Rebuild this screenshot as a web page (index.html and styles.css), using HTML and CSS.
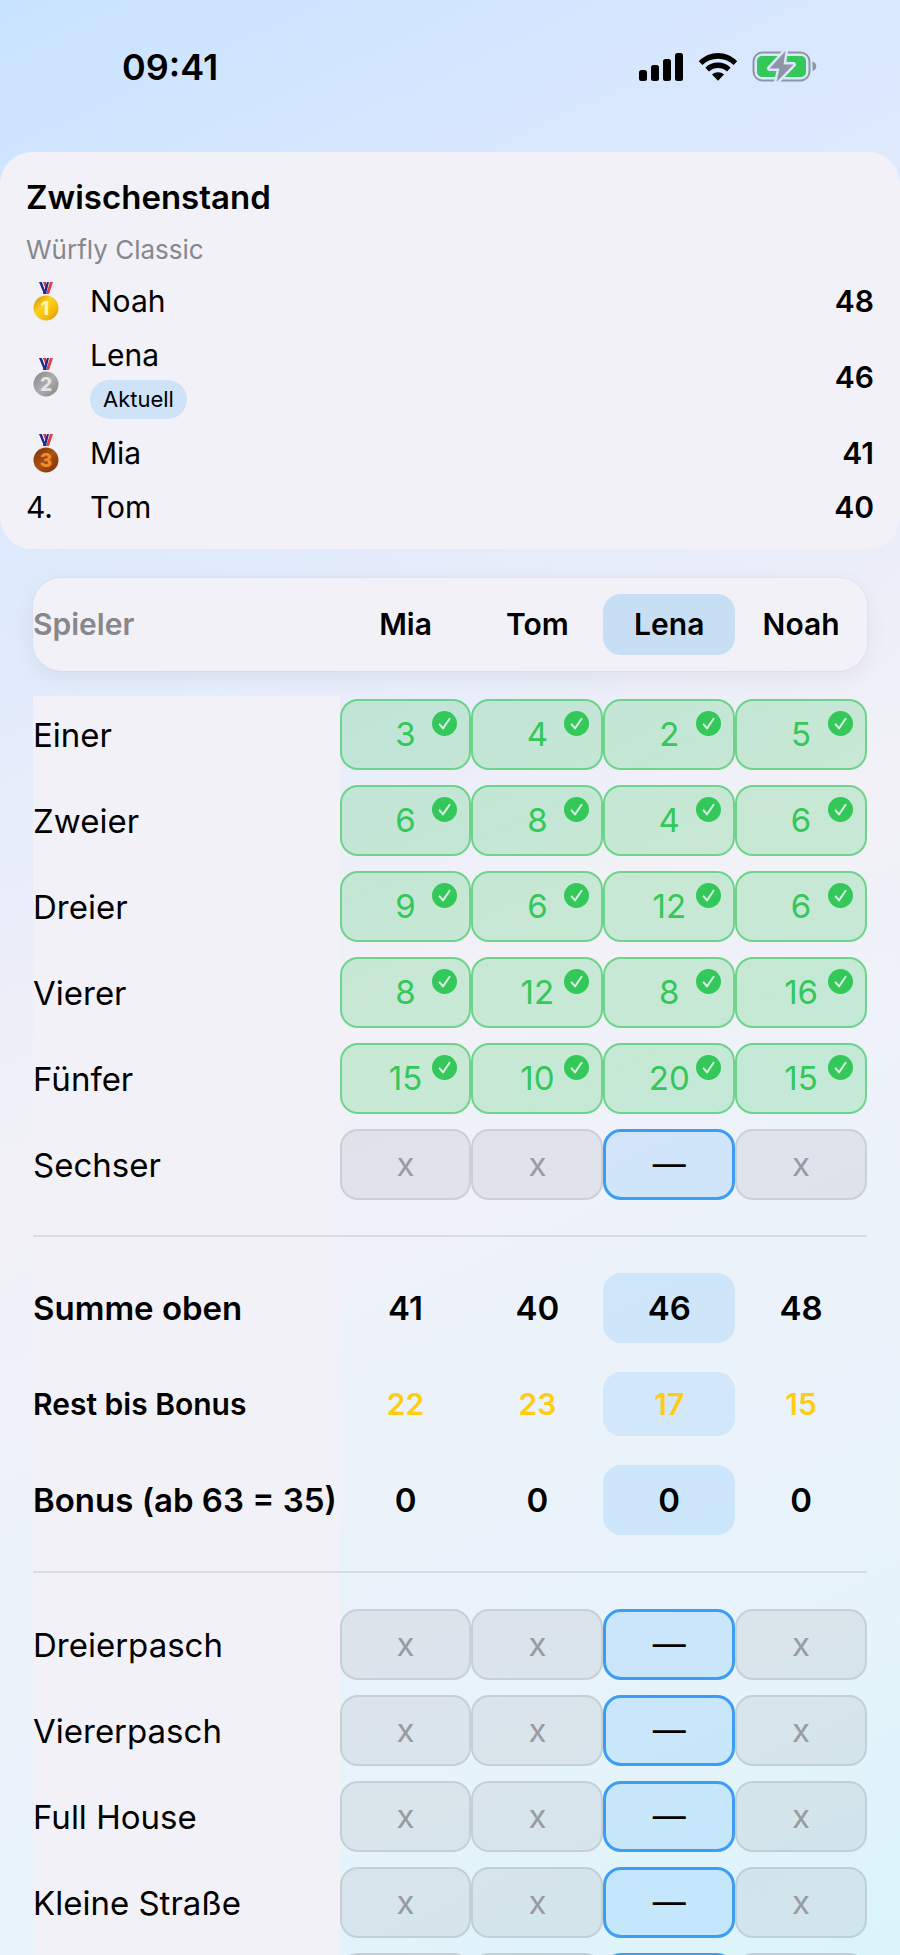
FILE: index.html
```html
<!DOCTYPE html>
<html lang="de">
<head>
    <meta charset="UTF-8">
    <meta name="viewport" content="width=device-width, initial-scale=1.0">
    <title>Würfly Classic - Zwischenstand</title>
    <link rel="stylesheet" href="styles.css">
</head>
<body>
    <svg class="sprite" aria-hidden="true">
        <symbol id="check" viewBox="0 0 25 25">
            <circle cx="12.5" cy="12.5" r="12.5" fill="#34c759"/>
            <path d="M7.600 13.400L11 17.400L17.600 7.800" fill="none" stroke="#d9f3e1" stroke-width="2" stroke-linecap="round" stroke-linejoin="round"/>
        </symbol>
        <symbol id="ribbon" viewBox="0 0 26 13">
            <path d="M6 0h3l5 12h-3z" fill="#22278f"/>
            <path d="M9 0h1l4 9-1 3z" fill="#f4f4fa"/>
            <path d="M10 0h3l1 5-1 3z" fill="#d8343c"/>
            <path d="M14 0h2l-3 12h-3z" fill="#22278f"/>
            <path d="M20 0h-3l-4 12h3z" fill="#e04048"/>
        </symbol>
        <linearGradient id="gold" x1="0" y1="0" x2="1" y2="1">
            <stop offset="0" stop-color="#c98a06"/>
            <stop offset="0.4" stop-color="#fbd21c"/>
            <stop offset="0.7" stop-color="#f3bb0c"/>
            <stop offset="1" stop-color="#c98a06"/>
        </linearGradient>
        <linearGradient id="silver" x1="0" y1="0" x2="1" y2="1">
            <stop offset="0" stop-color="#868686"/>
            <stop offset="0.5" stop-color="#adadad"/>
            <stop offset="1" stop-color="#858585"/>
        </linearGradient>
        <linearGradient id="bronze" x1="0" y1="0" x2="1" y2="1">
            <stop offset="0" stop-color="#7a3208"/>
            <stop offset="0.5" stop-color="#ad5010"/>
            <stop offset="1" stop-color="#74300a"/>
        </linearGradient>
    </svg>

    <div class="status-bar">
        <time class="clock">09:41</time>
        <div class="status-icons">
            <svg width="46" height="30" viewBox="0 0 46 30" aria-label="Mobilfunk">
                <rect x="1" y="18" width="8" height="11" rx="2.500"/>
                <rect x="13" y="13" width="8" height="16" rx="2.500"/>
                <rect x="25" y="7" width="8" height="22" rx="2.500"/>
                <rect x="37" y="1" width="8" height="28" rx="2.500"/>
            </svg>
            <svg width="40" height="30" viewBox="0 0 40 30" aria-label="WLAN">
                <path d="M0.800 9.200C11.500-1.900 28.500-1.900 39.200 9.200L35.600 13C27 4.600 13 4.600 4.400 13Z"/>
                <path d="M7.400 15.700C14.300 8.900 25.700 8.900 32.600 15.700L29 19.500C24 14.900 16 14.900 11 19.500Z"/>
                <path d="M14 22.500C17.500 19.600 22.500 19.600 26 22.500L20 28.800Z"/>
            </svg>
            <svg width="65" height="31" viewBox="0 0 65 31" aria-label="Akku lädt">
                <rect x="1.500" y="1.500" width="56" height="28" rx="9" fill="none" stroke="#8e95a6" stroke-width="2"/>
                <rect x="5" y="5" width="49" height="21" rx="5" fill="#34c759"/>
                <path d="M60.500 10.500c5 1 5 8.500 0 9.500z" fill="#8e95a6"/>
                <path d="M33.500 0L17.500 17.500H27.500L24.500 31L41.500 13.500H31.500Z" fill="#8e95a6" stroke="#dae7fe" stroke-width="5" stroke-linejoin="round" paint-order="stroke"/>
            </svg>
        </div>
    </div>

    <main>
        <section class="standings">
            <h1>Zwischenstand</h1>
            <p class="mode">Würfly Classic</p>
            <ol class="ranking">
                <li>
                    <svg class="medal" viewBox="0 0 26 39" role="img" aria-label="1.">
                        <use href="#ribbon" width="26" height="13"/>
                        <circle cx="13" cy="26" r="12.500" fill="url(#gold)"/>
                        <text x="12" y="33" fill="#fff3b0">1</text>
                    </svg>
                    <span class="name">Noah</span>
                    <span class="points">48</span>
                </li>
                <li>
                    <svg class="medal" viewBox="0 0 26 39" role="img" aria-label="2.">
                        <use href="#ribbon" width="26" height="13"/>
                        <circle cx="13" cy="26" r="12.500" fill="url(#silver)"/>
                        <text x="13" y="33" fill="#e4e4e4">2</text>
                    </svg>
                    <span class="name">Lena <span class="badge">Aktuell</span></span>
                    <span class="points">46</span>
                </li>
                <li>
                    <svg class="medal" viewBox="0 0 26 39" role="img" aria-label="3.">
                        <use href="#ribbon" width="26" height="13"/>
                        <circle cx="13" cy="26" r="12.500" fill="url(#bronze)"/>
                        <text x="13" y="33" fill="#ee8c34">3</text>
                    </svg>
                    <span class="name">Mia</span>
                    <span class="points">41</span>
                </li>
                <li>
                    <span>4.</span>
                    <span class="name">Tom</span>
                    <span class="points">40</span>
                </li>
            </ol>
        </section>

        <table class="board">
            <thead>
                <tr>
                    <th scope="col" class="corner">Spieler</th>
                    <th scope="col">Mia</th>
                    <th scope="col">Tom</th>
                    <th scope="col" class="current">Lena</th>
                    <th scope="col">Noah</th>
                </tr>
            </thead>
            <tbody class="fields">
                <tr>
                    <th scope="row">Einer</th>
                    <td class="done">3<svg class="check"><use href="#check"/></svg></td>
                    <td class="done">4<svg class="check"><use href="#check"/></svg></td>
                    <td class="done">2<svg class="check"><use href="#check"/></svg></td>
                    <td class="done">5<svg class="check"><use href="#check"/></svg></td>
                </tr>
                <tr>
                    <th scope="row">Zweier</th>
                    <td class="done">6<svg class="check"><use href="#check"/></svg></td>
                    <td class="done">8<svg class="check"><use href="#check"/></svg></td>
                    <td class="done">4<svg class="check"><use href="#check"/></svg></td>
                    <td class="done">6<svg class="check"><use href="#check"/></svg></td>
                </tr>
                <tr>
                    <th scope="row">Dreier</th>
                    <td class="done">9<svg class="check"><use href="#check"/></svg></td>
                    <td class="done">6<svg class="check"><use href="#check"/></svg></td>
                    <td class="done">12<svg class="check"><use href="#check"/></svg></td>
                    <td class="done">6<svg class="check"><use href="#check"/></svg></td>
                </tr>
                <tr>
                    <th scope="row">Vierer</th>
                    <td class="done">8<svg class="check"><use href="#check"/></svg></td>
                    <td class="done">12<svg class="check"><use href="#check"/></svg></td>
                    <td class="done">8<svg class="check"><use href="#check"/></svg></td>
                    <td class="done">16<svg class="check"><use href="#check"/></svg></td>
                </tr>
                <tr>
                    <th scope="row">Fünfer</th>
                    <td class="done">15<svg class="check"><use href="#check"/></svg></td>
                    <td class="done">10<svg class="check"><use href="#check"/></svg></td>
                    <td class="done">20<svg class="check"><use href="#check"/></svg></td>
                    <td class="done">15<svg class="check"><use href="#check"/></svg></td>
                </tr>
                <tr>
                    <th scope="row">Sechser</th>
                    <td><button type="button" disabled>x</button></td>
                    <td><button type="button" disabled>x</button></td>
                    <td><button type="button" class="open">—</button></td>
                    <td><button type="button" disabled>x</button></td>
                </tr>
            </tbody>
            <tbody class="totals">
                <tr>
                    <th scope="row">Summe oben</th>
                    <td>41</td>
                    <td>40</td>
                    <td class="current">46</td>
                    <td>48</td>
                </tr>
                <tr class="rest">
                    <th scope="row">Rest bis Bonus</th>
                    <td>22</td>
                    <td>23</td>
                    <td class="current">17</td>
                    <td>15</td>
                </tr>
                <tr>
                    <th scope="row">Bonus (ab 63 = 35)</th>
                    <td>0</td>
                    <td>0</td>
                    <td class="current">0</td>
                    <td>0</td>
                </tr>
            </tbody>
            <tbody class="fields lower">
                <tr>
                    <th scope="row">Dreierpasch</th>
                    <td><button type="button" disabled>x</button></td>
                    <td><button type="button" disabled>x</button></td>
                    <td><button type="button" class="open">—</button></td>
                    <td><button type="button" disabled>x</button></td>
                </tr>
                <tr>
                    <th scope="row">Viererpasch</th>
                    <td><button type="button" disabled>x</button></td>
                    <td><button type="button" disabled>x</button></td>
                    <td><button type="button" class="open">—</button></td>
                    <td><button type="button" disabled>x</button></td>
                </tr>
                <tr>
                    <th scope="row">Full House</th>
                    <td><button type="button" disabled>x</button></td>
                    <td><button type="button" disabled>x</button></td>
                    <td><button type="button" class="open">—</button></td>
                    <td><button type="button" disabled>x</button></td>
                </tr>
                <tr>
                    <th scope="row">Kleine Straße</th>
                    <td><button type="button" disabled>x</button></td>
                    <td><button type="button" disabled>x</button></td>
                    <td><button type="button" class="open">—</button></td>
                    <td><button type="button" disabled>x</button></td>
                </tr>
                <tr>
                    <th scope="row" aria-label="Große Straße"></th>
                    <td><button type="button" aria-label="Mia" disabled></button></td>
                    <td><button type="button" aria-label="Tom" disabled></button></td>
                    <td><button type="button" aria-label="Lena" class="open"></button></td>
                    <td><button type="button" aria-label="Noah" disabled></button></td>
                </tr>
            </tbody>
        </table>
    </main>
</body>
</html>
```
FILE: styles.css
```css
:root {
    --surface: #f2f1f7;
    --text: #000000;
    --muted: #87878c;
    --green: #34c759;
    --blue: #3d9df2;
    --yellow: #ffcc14;
    --highlight: rgba(0, 136, 255, 0.12);
    --columns: minmax(0, 307fr) repeat(4, minmax(0, 132fr));
}

* {
    box-sizing: border-box;
}

body {
    margin: 0;
    height: 100vh;
    display: flex;
    flex-direction: column;
    overflow: hidden;
    background: linear-gradient(155deg, #c8e3ff 0%, #d5e6ff 12%, #f2f1f7 50%, #edf2fa 64%, #e7f3fa 84%, #daf4fb 100%);
    color: var(--text);
    font-family: Inter, "Liberation Sans", sans-serif;
    font-size: 30px;
}

.sprite {
    position: absolute;
    width: 0;
    height: 0;
}

.status-bar {
    flex: none;
    display: flex;
    justify-content: space-between;
    align-items: center;
    height: 152px;
    padding: 0 83px 19px 122px;
}

.clock {
    font-size: 36px;
    font-weight: 600;
}

.status-icons {
    display: flex;
    align-items: center;
    gap: 14px;
}

main {
    flex: 1;
    min-height: 0;
    overflow-y: auto;
    scrollbar-width: none;
}

/* Standings card */
.standings {
    padding: 25px 26px 22px;
    border-radius: 32px;
    background-color: var(--surface);
}

h1 {
    margin: 0 0 16px;
    font-size: 33px;
    font-weight: 600;
    line-height: 40px;
}

.mode {
    margin: 0 0 14px;
    color: var(--muted);
    font-size: 26px;
    line-height: 34px;
}

.ranking {
    margin: 0;
    padding: 0;
    list-style: none;
    display: grid;
    gap: 14px;
}

.ranking li {
    display: grid;
    grid-template-columns: 40px 1fr auto;
    column-gap: 24px;
    align-items: center;
    line-height: 40px;
}

.medal {
    justify-self: center;
    width: 26px;
    height: 39px;
}

.medal text {
    font-size: 19px;
    font-weight: 800;
    text-anchor: middle;
}

.name {
    display: flex;
    flex-direction: column;
    align-items: flex-start;
    gap: 5px;
}

.badge {
    padding: 0 13px;
    border-radius: 20px;
    background-color: #cfe3f8;
    font-size: 22px;
    line-height: 39px;
}

.points {
    font-weight: 600;
}

/* Score board */
.board {
    display: block;
    margin: 29px 33px 0;
}

.board thead,
.board tbody {
    display: block;
}

.board tr {
    display: grid;
    grid-template-columns: var(--columns);
    align-items: center;
}

.board th,
.board td {
    padding: 0;
    text-align: center;
    white-space: nowrap;
}

.board th:first-child {
    text-align: left;
}

.board thead tr {
    padding: 16px 0;
    border-radius: 28px;
    background-color: var(--surface);
    box-shadow: 0 0 2px rgba(0, 0, 0, 0.08), 0 6px 24px rgba(0, 0, 0, 0.06);
}

.board thead th {
    font-size: 30px;
    font-weight: 600;
    line-height: 61px;
}

.board thead .corner {
    color: var(--muted);
}

.board .current {
    border-radius: 18px;
    background-color: var(--highlight);
}

.board thead .current {
    background-color: #c8def5;
}

/* the label column has its own surface, running through all groups */
.board tbody {
    background: linear-gradient(var(--surface), var(--surface)) no-repeat left / 36.8% 100%;
}

.fields {
    margin-top: 25px;
    padding: 3px 0 35px;
    font-size: 33px;
}

.fields.lower {
    margin-top: 0;
    padding-top: 36px;
}

.fields tr + tr {
    margin-top: 15px;
}

.fields th {
    font-weight: 400;
}

.fields td {
    position: relative;
    height: 71px;
    line-height: 71px;
}

.fields .done,
.fields button {
    border: 2px solid rgba(52, 199, 89, 0.6);
    border-radius: 18px;
    background-color: rgba(52, 199, 89, 0.22);
    color: var(--green);
    line-height: 67px;
}

.check {
    position: absolute;
    top: 10px;
    right: 12px;
    width: 25px;
    height: 25px;
}

.fields button {
    display: block;
    width: 100%;
    height: 71px;
    padding: 0;
    border-color: rgba(60, 60, 67, 0.12);
    background-color: rgba(120, 120, 128, 0.12);
    color: #989ba2;
    font: inherit;
    line-height: 67px;
}

.fields .open {
    border: 3px solid var(--blue);
    background-color: var(--highlight);
    color: var(--text);
    line-height: 65px;
    cursor: pointer;
}

.totals {
    padding: 36px 0;
    border-top: 2px solid rgba(60, 60, 67, 0.12);
    border-bottom: 2px solid rgba(60, 60, 67, 0.12);
    font-size: 33px;
}

.totals th,
.totals td {
    font-weight: 600;
    line-height: 70px;
}

.totals tr + tr {
    margin-top: 29px;
}

.totals .rest th,
.totals .rest td {
    font-size: 30px;
    line-height: 64px;
}

.totals .rest td {
    color: var(--yellow);
}

.totals .rest .current {
    background-color: rgba(0, 136, 255, 0.1);
}
```
